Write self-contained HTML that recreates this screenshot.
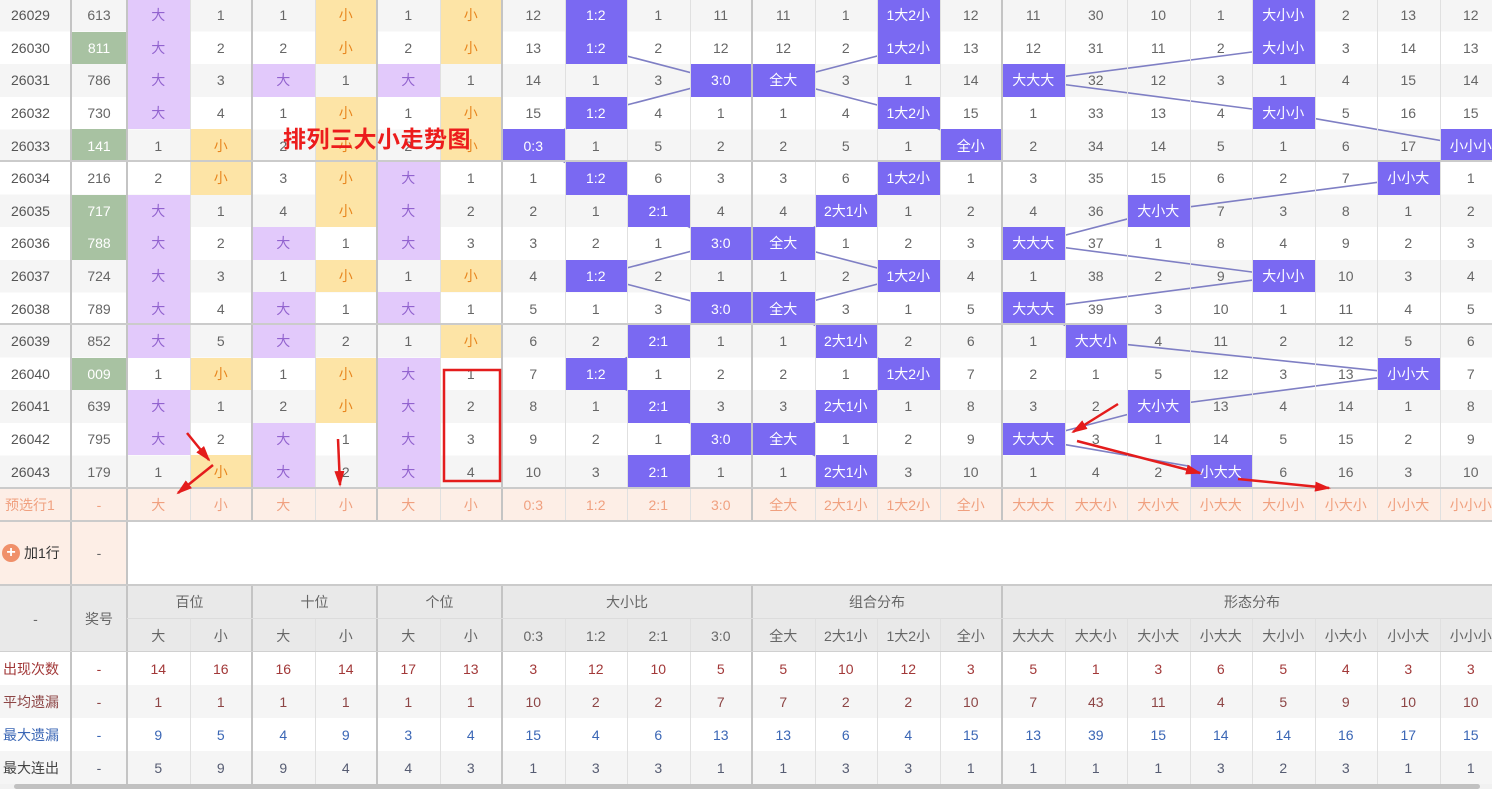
<!DOCTYPE html>
<html><head><meta charset="utf-8">
<style>
*{margin:0;padding:0;box-sizing:border-box}
html,body{width:1492px;height:789px;overflow:hidden;background:#fff;font-family:"Liberation Sans","Noto Sans CJK SC",sans-serif;font-size:14px;color:#666}
.stripe{position:absolute;left:0;top:-1px;width:1502px;height:489px;background:repeating-linear-gradient(#f5f5f5 0 32.6px,#fff 32.6px 65.2px)}
svg{position:absolute;left:0;top:0}
.grid{position:absolute;left:0;top:-1px;display:grid;grid-template-columns:71px 56px repeat(22,62.5px);grid-auto-rows:32.6px;width:1502px}
.grid i{font-style:normal;display:flex;align-items:center;justify-content:center;white-space:nowrap}
.grid i.g{background:#a8c2a2;color:#fff;margin:0 1px}
.grid i.d{background:#e2c9fb;color:#9263cf}
.grid i.x{background:#fde4a6;color:#e8861f}
.grid i.b{background:#7a69f2;color:#fff}
.grid i:nth-child(24n+1){color:#555;justify-content:flex-start;padding-left:11px}
.bot{position:absolute;left:0;top:488px;display:grid;grid-template-columns:71px 56px repeat(22,62.5px);grid-template-rows:33px 64px 34px 33px 33px 33px 33px 33px;width:1502px}
.bot i{font-style:normal;display:flex;align-items:center;justify-content:center;white-space:nowrap}
.yx{background:#fdeee6;color:#f0a07f}
.hd{background:#e9e9e9;color:#666}
.r1{color:#a23838}.r2{color:#8d4545;background:#f5f5f5}.r3{color:#3a66b5}.r4{color:#565c72;background:#f5f5f5}
.vl{position:absolute;width:1px;background:#e0e0e0}
.vt{position:absolute;width:2px;background:#c4c4c4}
.hl{position:absolute;left:0;width:1502px;height:2px;background:#cbcbcb}
</style></head><body>
<div class="stripe"></div>
<svg width="1492" height="789" style="z-index:1">
<g fill="none" stroke="#7f7fc4" stroke-width="1.6">
<polyline points="595.75,15.3 595.75,47.9 720.75,80.5 595.75,113.1 533.25,145.7 595.75,178.3 658.25,210.9 720.75,243.5 595.75,276.1 720.75,308.7 658.25,341.3 595.75,373.9 658.25,406.5 720.75,439.1 658.25,471.7"/>
<polyline points="908.25,15.3 908.25,47.9 783.25,80.5 908.25,113.1 970.75,145.7 908.25,178.3 845.75,210.9 783.25,243.5 908.25,276.1 783.25,308.7 845.75,341.3 908.25,373.9 845.75,406.5 783.25,439.1 845.75,471.7"/>
<polyline points="1283.25,15.3 1283.25,47.9 1033.25,80.5 1283.25,113.1 1470.75,145.7 1408.25,178.3 1158.25,210.9 1033.25,243.5 1283.25,276.1 1033.25,308.7 1095.75,341.3 1408.25,373.9 1158.25,406.5 1033.25,439.1 1220.75,471.7"/>
</g></svg>
<div class="grid" style="z-index:2">
<i>26029</i><i>613</i><i class=d>大</i><i>1</i><i>1</i><i class=x>小</i><i>1</i><i class=x>小</i><i>12</i><i class=b>1:2</i><i>1</i><i>11</i><i>11</i><i>1</i><i class=b>1大2小</i><i>12</i><i>11</i><i>30</i><i>10</i><i>1</i><i class=b>大小小</i><i>2</i><i>13</i><i>12</i>
<i>26030</i><i class=g>811</i><i class=d>大</i><i>2</i><i>2</i><i class=x>小</i><i>2</i><i class=x>小</i><i>13</i><i class=b>1:2</i><i>2</i><i>12</i><i>12</i><i>2</i><i class=b>1大2小</i><i>13</i><i>12</i><i>31</i><i>11</i><i>2</i><i class=b>大小小</i><i>3</i><i>14</i><i>13</i>
<i>26031</i><i>786</i><i class=d>大</i><i>3</i><i class=d>大</i><i>1</i><i class=d>大</i><i>1</i><i>14</i><i>1</i><i>3</i><i class=b>3:0</i><i class=b>全大</i><i>3</i><i>1</i><i>14</i><i class=b>大大大</i><i>32</i><i>12</i><i>3</i><i>1</i><i>4</i><i>15</i><i>14</i>
<i>26032</i><i>730</i><i class=d>大</i><i>4</i><i>1</i><i class=x>小</i><i>1</i><i class=x>小</i><i>15</i><i class=b>1:2</i><i>4</i><i>1</i><i>1</i><i>4</i><i class=b>1大2小</i><i>15</i><i>1</i><i>33</i><i>13</i><i>4</i><i class=b>大小小</i><i>5</i><i>16</i><i>15</i>
<i>26033</i><i class=g>141</i><i>1</i><i class=x>小</i><i>2</i><i class=x>小</i><i>2</i><i class=x>小</i><i class=b>0:3</i><i>1</i><i>5</i><i>2</i><i>2</i><i>5</i><i>1</i><i class=b>全小</i><i>2</i><i>34</i><i>14</i><i>5</i><i>1</i><i>6</i><i>17</i><i class=b>小小小</i>
<i>26034</i><i>216</i><i>2</i><i class=x>小</i><i>3</i><i class=x>小</i><i class=d>大</i><i>1</i><i>1</i><i class=b>1:2</i><i>6</i><i>3</i><i>3</i><i>6</i><i class=b>1大2小</i><i>1</i><i>3</i><i>35</i><i>15</i><i>6</i><i>2</i><i>7</i><i class=b>小小大</i><i>1</i>
<i>26035</i><i class=g>717</i><i class=d>大</i><i>1</i><i>4</i><i class=x>小</i><i class=d>大</i><i>2</i><i>2</i><i>1</i><i class=b>2:1</i><i>4</i><i>4</i><i class=b>2大1小</i><i>1</i><i>2</i><i>4</i><i>36</i><i class=b>大小大</i><i>7</i><i>3</i><i>8</i><i>1</i><i>2</i>
<i>26036</i><i class=g>788</i><i class=d>大</i><i>2</i><i class=d>大</i><i>1</i><i class=d>大</i><i>3</i><i>3</i><i>2</i><i>1</i><i class=b>3:0</i><i class=b>全大</i><i>1</i><i>2</i><i>3</i><i class=b>大大大</i><i>37</i><i>1</i><i>8</i><i>4</i><i>9</i><i>2</i><i>3</i>
<i>26037</i><i>724</i><i class=d>大</i><i>3</i><i>1</i><i class=x>小</i><i>1</i><i class=x>小</i><i>4</i><i class=b>1:2</i><i>2</i><i>1</i><i>1</i><i>2</i><i class=b>1大2小</i><i>4</i><i>1</i><i>38</i><i>2</i><i>9</i><i class=b>大小小</i><i>10</i><i>3</i><i>4</i>
<i>26038</i><i>789</i><i class=d>大</i><i>4</i><i class=d>大</i><i>1</i><i class=d>大</i><i>1</i><i>5</i><i>1</i><i>3</i><i class=b>3:0</i><i class=b>全大</i><i>3</i><i>1</i><i>5</i><i class=b>大大大</i><i>39</i><i>3</i><i>10</i><i>1</i><i>11</i><i>4</i><i>5</i>
<i>26039</i><i>852</i><i class=d>大</i><i>5</i><i class=d>大</i><i>2</i><i>1</i><i class=x>小</i><i>6</i><i>2</i><i class=b>2:1</i><i>1</i><i>1</i><i class=b>2大1小</i><i>2</i><i>6</i><i>1</i><i class=b>大大小</i><i>4</i><i>11</i><i>2</i><i>12</i><i>5</i><i>6</i>
<i>26040</i><i class=g>009</i><i>1</i><i class=x>小</i><i>1</i><i class=x>小</i><i class=d>大</i><i>1</i><i>7</i><i class=b>1:2</i><i>1</i><i>2</i><i>2</i><i>1</i><i class=b>1大2小</i><i>7</i><i>2</i><i>1</i><i>5</i><i>12</i><i>3</i><i>13</i><i class=b>小小大</i><i>7</i>
<i>26041</i><i>639</i><i class=d>大</i><i>1</i><i>2</i><i class=x>小</i><i class=d>大</i><i>2</i><i>8</i><i>1</i><i class=b>2:1</i><i>3</i><i>3</i><i class=b>2大1小</i><i>1</i><i>8</i><i>3</i><i>2</i><i class=b>大小大</i><i>13</i><i>4</i><i>14</i><i>1</i><i>8</i>
<i>26042</i><i>795</i><i class=d>大</i><i>2</i><i class=d>大</i><i>1</i><i class=d>大</i><i>3</i><i>9</i><i>2</i><i>1</i><i class=b>3:0</i><i class=b>全大</i><i>1</i><i>2</i><i>9</i><i class=b>大大大</i><i>3</i><i>1</i><i>14</i><i>5</i><i>15</i><i>2</i><i>9</i>
<i>26043</i><i>179</i><i>1</i><i class=x>小</i><i class=d>大</i><i>2</i><i class=d>大</i><i>4</i><i>10</i><i>3</i><i class=b>2:1</i><i>1</i><i>1</i><i class=b>2大1小</i><i>3</i><i>10</i><i>1</i><i>4</i><i>2</i><i class=b>小大大</i><i>6</i><i>16</i><i>3</i><i>10</i>
</div>
<div class="bot">
<i class=yx style="justify-content:flex-start;padding-left:5px">预选行1</i><i class=yx>-</i><i class=yx>大</i><i class=yx>小</i><i class=yx>大</i><i class=yx>小</i><i class=yx>大</i><i class=yx>小</i><i class=yx>0:3</i><i class=yx>1:2</i><i class=yx>2:1</i><i class=yx>3:0</i><i class=yx>全大</i><i class=yx>2大1小</i><i class=yx>1大2小</i><i class=yx>全小</i><i class=yx>大大大</i><i class=yx>大大小</i><i class=yx>大小大</i><i class=yx>小大大</i><i class=yx>大小小</i><i class=yx>小大小</i><i class=yx>小小大</i><i class=yx>小小小</i>
<i style="background:#fdeee6;color:#333;justify-content:flex-start;padding-left:2px"><b style="display:inline-flex;width:18px;height:18px;border-radius:50%;background:#f0906a;color:#fff;font-size:16px;align-items:center;justify-content:center;margin-right:4px;font-weight:bold;line-height:1">+</b>加1行</i><i style="background:#fdeee6">-</i><i style="grid-column:3/25;background:#fff"></i>
<i class=hd style="grid-row:3/5;grid-column:1">-</i><i class=hd style="grid-row:3/5;grid-column:2">奖号</i>
<i class=hd style="grid-column:3/5">百位</i><i class=hd style="grid-column:5/7">十位</i><i class=hd style="grid-column:7/9">个位</i><i class=hd style="grid-column:9/13">大小比</i><i class=hd style="grid-column:13/17">组合分布</i><i class=hd style="grid-column:17/25">形态分布</i>
<i class=hd>大</i><i class=hd>小</i><i class=hd>大</i><i class=hd>小</i><i class=hd>大</i><i class=hd>小</i><i class=hd>0:3</i><i class=hd>1:2</i><i class=hd>2:1</i><i class=hd>3:0</i><i class=hd>全大</i><i class=hd>2大1小</i><i class=hd>1大2小</i><i class=hd>全小</i><i class=hd>大大大</i><i class=hd>大大小</i><i class=hd>大小大</i><i class=hd>小大大</i><i class=hd>大小小</i><i class=hd>小大小</i><i class=hd>小小大</i><i class=hd>小小小</i>
<i class=r1 style="justify-content:flex-start;padding-left:3px">出现次数</i><i class=r1>-</i><i class=r1>14</i><i class=r1>16</i><i class=r1>16</i><i class=r1>14</i><i class=r1>17</i><i class=r1>13</i><i class=r1>3</i><i class=r1>12</i><i class=r1>10</i><i class=r1>5</i><i class=r1>5</i><i class=r1>10</i><i class=r1>12</i><i class=r1>3</i><i class=r1>5</i><i class=r1>1</i><i class=r1>3</i><i class=r1>6</i><i class=r1>5</i><i class=r1>4</i><i class=r1>3</i><i class=r1>3</i>
<i class=r2 style="justify-content:flex-start;padding-left:3px">平均遗漏</i><i class=r2>-</i><i class=r2>1</i><i class=r2>1</i><i class=r2>1</i><i class=r2>1</i><i class=r2>1</i><i class=r2>1</i><i class=r2>10</i><i class=r2>2</i><i class=r2>2</i><i class=r2>7</i><i class=r2>7</i><i class=r2>2</i><i class=r2>2</i><i class=r2>10</i><i class=r2>7</i><i class=r2>43</i><i class=r2>11</i><i class=r2>4</i><i class=r2>5</i><i class=r2>9</i><i class=r2>10</i><i class=r2>10</i>
<i class=r3 style="justify-content:flex-start;padding-left:3px">最大遗漏</i><i class=r3>-</i><i class=r3>9</i><i class=r3>5</i><i class=r3>4</i><i class=r3>9</i><i class=r3>3</i><i class=r3>4</i><i class=r3>15</i><i class=r3>4</i><i class=r3>6</i><i class=r3>13</i><i class=r3>13</i><i class=r3>6</i><i class=r3>4</i><i class=r3>15</i><i class=r3>13</i><i class=r3>39</i><i class=r3>15</i><i class=r3>14</i><i class=r3>14</i><i class=r3>16</i><i class=r3>17</i><i class=r3>15</i>
<i class=r4 style="justify-content:flex-start;padding-left:3px;color:#444">最大连出</i><i class=r4>-</i><i class=r4>5</i><i class=r4>9</i><i class=r4>9</i><i class=r4>4</i><i class=r4>4</i><i class=r4>3</i><i class=r4>1</i><i class=r4>3</i><i class=r4>3</i><i class=r4>1</i><i class=r4>1</i><i class=r4>3</i><i class=r4>3</i><i class=r4>1</i><i class=r4>1</i><i class=r4>1</i><i class=r4>1</i><i class=r4>3</i><i class=r4>2</i><i class=r4>3</i><i class=r4>1</i><i class=r4>1</i>
</div>
<div style="position:absolute;left:0;top:0;z-index:3">
<!-- thin verticals -->
<div class="vl" style="left:190px;top:0;height:521px"></div><div class="vl" style="left:315px;top:0;height:521px"></div><div class="vl" style="left:440px;top:0;height:521px"></div>
<div class="vl" style="left:565px;top:0;height:521px"></div><div class="vl" style="left:627px;top:0;height:521px"></div><div class="vl" style="left:690px;top:0;height:521px"></div>
<div class="vl" style="left:815px;top:0;height:521px"></div><div class="vl" style="left:877px;top:0;height:521px"></div><div class="vl" style="left:940px;top:0;height:521px"></div>
<div class="vl" style="left:1065px;top:0;height:521px"></div><div class="vl" style="left:1127px;top:0;height:521px"></div><div class="vl" style="left:1190px;top:0;height:521px"></div><div class="vl" style="left:1252px;top:0;height:521px"></div><div class="vl" style="left:1315px;top:0;height:521px"></div><div class="vl" style="left:1377px;top:0;height:521px"></div><div class="vl" style="left:1440px;top:0;height:521px"></div>
<div class="vl" style="left:190px;top:619px;height:165px"></div><div class="vl" style="left:315px;top:619px;height:165px"></div><div class="vl" style="left:440px;top:619px;height:165px"></div>
<div class="vl" style="left:565px;top:619px;height:165px"></div><div class="vl" style="left:627px;top:619px;height:165px"></div><div class="vl" style="left:690px;top:619px;height:165px"></div>
<div class="vl" style="left:815px;top:619px;height:165px"></div><div class="vl" style="left:877px;top:619px;height:165px"></div><div class="vl" style="left:940px;top:619px;height:165px"></div>
<div class="vl" style="left:1065px;top:619px;height:165px"></div><div class="vl" style="left:1127px;top:619px;height:165px"></div><div class="vl" style="left:1190px;top:619px;height:165px"></div><div class="vl" style="left:1252px;top:619px;height:165px"></div><div class="vl" style="left:1315px;top:619px;height:165px"></div><div class="vl" style="left:1377px;top:619px;height:165px"></div><div class="vl" style="left:1440px;top:619px;height:165px"></div>
<!-- thick verticals -->
<div class="vt" style="left:70px;top:0;height:784px"></div><div class="vt" style="left:126px;top:0;height:784px"></div>
<div class="vt" style="left:251px;top:0;height:521px"></div><div class="vt" style="left:376px;top:0;height:521px"></div><div class="vt" style="left:501px;top:0;height:521px"></div><div class="vt" style="left:751px;top:0;height:521px"></div><div class="vt" style="left:1001px;top:0;height:521px"></div>
<div class="vt" style="left:251px;top:585px;height:199px"></div><div class="vt" style="left:376px;top:585px;height:199px"></div><div class="vt" style="left:501px;top:585px;height:199px"></div><div class="vt" style="left:751px;top:585px;height:199px"></div><div class="vt" style="left:1001px;top:585px;height:199px"></div>
<!-- horizontals -->
<div class="hl" style="top:160px"></div><div class="hl" style="top:323px"></div><div class="hl" style="top:487px"></div><div class="hl" style="top:520px"></div><div class="hl" style="top:584px"></div>
<div class="hl" style="top:618px;left:127px;height:1px;background:#dcdcdc"></div><div class="hl" style="top:651px;height:1px;background:#d0d0d0"></div>
</div>
<div style="position:absolute;left:283px;top:121px;z-index:4;color:#ec1c1c;font-size:23px;font-weight:bold;letter-spacing:0.5px;font-family:'Noto Sans CJK SC',sans-serif;line-height:32px">排列三大小走势图</div>
<svg width="1492" height="789" style="z-index:5">
<defs><marker id="ah" markerWidth="10" markerHeight="8" refX="9" refY="4" orient="auto" markerUnits="userSpaceOnUse"><path d="M0,0 L12,4 L0,8 Z" fill="#e41c1c"/></marker>
<marker id="ah2" markerWidth="16" markerHeight="10" refX="14" refY="5" orient="auto" markerUnits="userSpaceOnUse"><path d="M0,0 L16,5 L0,10 Z" fill="#e41c1c"/></marker></defs>
<rect x="444" y="370" width="56" height="111" fill="none" stroke="#e41c1c" stroke-width="2.5"/>
<g stroke="#e41c1c" stroke-width="2.5" fill="none">
<line x1="187" y1="433" x2="209" y2="460" marker-end="url(#ah2)"/>
<line x1="213" y1="465" x2="178" y2="493" marker-end="url(#ah2)"/>
<line x1="338" y1="439" x2="340" y2="485" marker-end="url(#ah2)"/>
<line x1="1118" y1="404" x2="1073" y2="432" marker-end="url(#ah2)"/>
<line x1="1077" y1="441" x2="1200" y2="473" marker-end="url(#ah2)"/>
<line x1="1238" y1="479" x2="1329" y2="488" marker-end="url(#ah2)"/>
</g></svg>
<div style="position:absolute;left:0;top:784px;width:1492px;height:5px;background:#f1f1f1;z-index:6"><div style="position:absolute;left:14px;top:0;width:1466px;height:5px;background:#c1c1c1;border-radius:3px"></div></div>
</body></html>
